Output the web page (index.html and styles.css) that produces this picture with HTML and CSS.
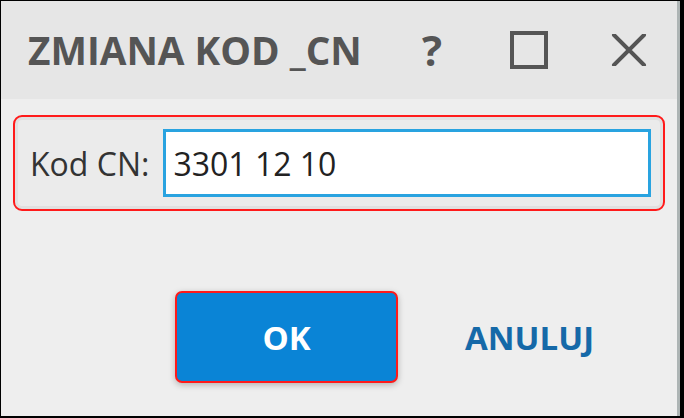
FILE: index.html
```html
<!DOCTYPE html>
<html>
<head>
<meta charset="utf-8">
<link rel="stylesheet" href="styles.css">
</head>
<body>
<div class="frame">
  <div class="dialog">
    <div class="titlebar">
      <div class="title">ZMIANA KOD _CN</div>
      <div class="controls">
        <span class="help">?</span>
        <svg class="ctl max" width="38" height="38" viewBox="0 0 38 38"><rect x="2" y="2" width="34" height="34" fill="none" stroke="#555" stroke-width="4"/></svg>
        <svg class="ctl close" width="36" height="32" viewBox="0 0 36 32"><path d="M3 1 L33 31 M33 1 L3 31" stroke="#555" stroke-width="4" stroke-linecap="round"/></svg>
      </div>
    </div>
    <div class="content">
      <div class="group">
        <label class="lbl">Kod CN:</label>
        <div class="input">3301 12 10</div>
      </div>
      <div class="buttons">
        <div class="btn ok">OK</div>
        <div class="btn cancel">ANULUJ</div>
      </div>
    </div>
  </div>
</div>
</body>
</html>
```
FILE: styles.css
```css
html, body {
  margin: 0;
  padding: 0;
  background: #000;
}
.frame {
  width: 684px;
  height: 418px;
  box-sizing: border-box;
  padding: 1px 0 2px 1px;
  background: #000;
  font-family: "Open Sans", "Liberation Sans", sans-serif;
}
.dialog {
  height: 100%;
  box-sizing: border-box;
  border-right: 3px solid #adb4b4;
  margin-right: 4px;
  background: #eeeeee;
  display: flex;
  flex-direction: column;
}
.titlebar {
  height: 98px;
  background: #e6e6e6;
  display: flex;
  align-items: center;
  justify-content: space-between;
  padding: 0 0 0 27px;
}
.title {
  font-size: 38.7px;
  font-weight: 700;
  color: #555555;
}
.controls {
  display: flex;
  align-items: center;
  margin-right: 30px;
}
.help {
  font-size: 42px;
  font-weight: 700;
  color: #555555;
  margin-right: 68px;
  line-height: 1;
}
.max {
  margin-right: 63px;
}
.content {
  flex: 1;
  padding: 16px 12px 0 12px;
}
.group {
  height: 96px;
  box-sizing: border-box;
  border: 2px solid #ff1a1a;
  border-radius: 9px;
  background: #ebebeb;
  box-shadow: inset 0 0 0 3px #e0e0e0;
  display: flex;
  align-items: center;
  padding: 0 12px 0 15px;
}
.lbl {
  font-size: 32px;
  color: #333333;
  margin-right: 14px;
}
.input {
  flex: 1;
  height: 68px;
  box-sizing: border-box;
  border: 3px solid #29a3e0;
  background: #ffffff;
  font-size: 32px;
  color: #222;
  display: flex;
  align-items: center;
  padding-left: 7px;
}
.buttons {
  display: flex;
  align-items: center;
  margin-top: 80px;
  padding-left: 162px;
}
.btn {
  font-weight: 700;
  font-size: 33px;
}
.ok {
  width: 223px;
  height: 92px;
  box-sizing: border-box;
  background: #0a84d6;
  border: 2px solid #ff1a1a;
  border-radius: 7px;
  color: #ffffff;
  display: flex;
  align-items: center;
  justify-content: center;
  box-shadow: 0 2px 6px rgba(0,0,0,0.25);
}
.cancel {
  color: #1569a8;
  margin-left: 67px;
}
```
